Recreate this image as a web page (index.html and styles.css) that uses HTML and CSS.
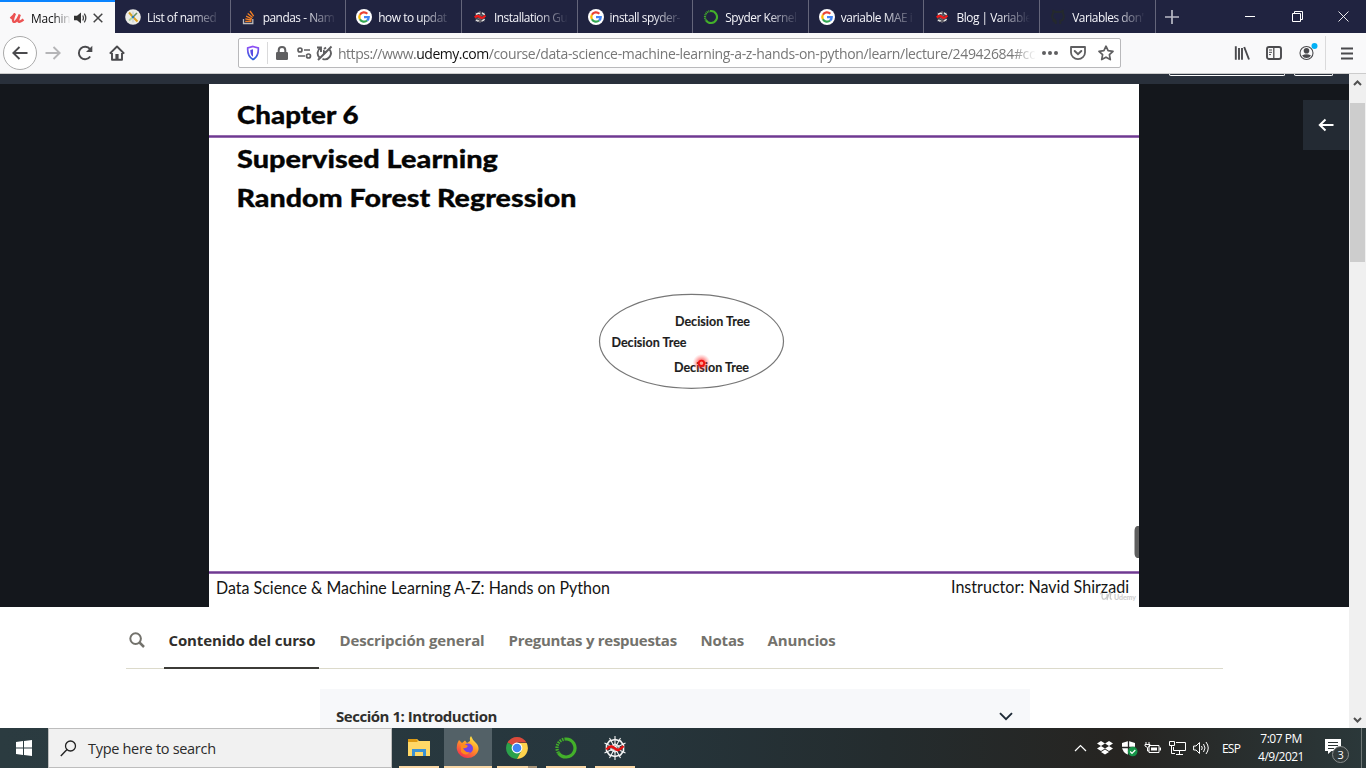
FILE: index.html
```html
<!DOCTYPE html>
<html lang="es">
<head>
<meta charset="utf-8">
<title>Machine Learning</title>
<link rel="stylesheet" href="styles.css">
</head>
<body>
<svg class="defs" width="0" height="0">
  <symbol id="google" viewBox="0 0 16 16"><circle cx="8" cy="8" r="8" fill="#fff"/><g fill="none" stroke-width="2.3"><path d="M11.3 4.7A4.7 4.7 0 0 0 3.9 5.7" stroke="#ea4335"/><path d="M3.9 5.7A4.7 4.7 0 0 0 3.9 10.3" stroke="#fbbc05"/><path d="M3.9 10.3A4.7 4.7 0 0 0 11.1 11.5" stroke="#34a853"/><path d="M11.1 11.5A4.7 4.7 0 0 0 12.7 8.1H8" stroke="#4285f4"/></g></symbol>
  <symbol id="spyder" viewBox="0 0 26 26"><g fill="none" stroke="#f4f4f4"><path d="M13 1V25M2.500 8L23.500 18M2.500 18L23.500 8M7.500 3L18.500 23M18.500 3L7.500 23" stroke-width="1.100"/><path d="M13 4.500L18.500 6L21.500 10L21.500 16L18.500 20L13 21.500L7.500 20L4.500 16L4.500 10L7.500 6Z" stroke-width="1.600"/><path d="M13 9L17 11V15L13 17L9 15V11Z" stroke-width="1.200"/></g><path d="M4.500 14.500C8 10 10.500 11 13 13.500S18 15 21.500 11" fill="none" stroke="#e31212" stroke-width="2.600"/></symbol>
  <symbol id="spyder-small" viewBox="0 0 16 16"><circle cx="8" cy="8" r="5.200" fill="#45434c"/><path d="M8 2V14M3.500 4L12.500 12M3.500 12L12.500 4" stroke="#77757d" stroke-width="1"/><path d="M4 5.500Q6 3.500 8 4.600M10 4Q12 4.500 12.500 6M4 11Q5.500 12.500 7 11.500M9.500 12Q11.500 12 12.500 10" fill="none" stroke="#e4e4e4" stroke-width="1.500"/><path d="M2.800 8.500C5 6 7 7 8.500 8.300S11 9 13.400 6.500" fill="none" stroke="#f01818" stroke-width="2.200"/></symbol>
  <symbol id="anaconda" viewBox="0 0 24 24"><path d="M12 3A9 9 0 1 1 4.5 17" fill="none" stroke="#43b02a" stroke-width="3.2"/><path d="M12 3A9 9 0 0 0 4.5 17" fill="none" stroke="#43b02a" stroke-width="3.2" stroke-dasharray="1.5 1"/></symbol>
</svg>

<header class="tabstrip">
  <div class="tab active"><svg class="fav" viewBox="0 0 16 16"><path d="M1.500 8.500Q4.500 6 6 3.500Q3.800 8.500 4 10.500Q4.300 12.800 6.500 11.500Q8.500 10 10.800 4.500Q9 9.500 9.300 11Q10 13 14.500 9.500" fill="none" stroke="#ec5252" stroke-width="2.300"/></svg><span class="label">Machin</span>
    <svg class="sound" width="15" height="14" viewBox="0 0 15 14"><path d="M1 4.7H4L8 1.5V12.5L4 9.3H1Z" fill="#333"/><path d="M9.7 4.5Q11.2 7 9.7 9.5M11.3 2.6Q14.3 7 11.3 11.4" fill="none" stroke="#444" stroke-width="1.3"/></svg>
    <svg class="close" width="10" height="10" viewBox="0 0 10 10"><path d="M.7.7L9.3 9.3M9.3.7L.7 9.3" stroke="#444" stroke-width="1.5"/></svg></div>
  <div class="tab"><svg class="fav" viewBox="0 0 16 16"><circle cx="8" cy="8" r="7.8" fill="#ecece7"/><path d="M8 8L4 3.500" stroke="#d8a322" stroke-width="2"/><path d="M8 8L12.500 12.500" stroke="#e2a31f" stroke-width="2"/><path d="M8 8L12 4" stroke="#698f5e" stroke-width="1.600"/><path d="M8 8L4 11.500" stroke="#a9d3a1" stroke-width="1.800"/><path d="M8 8V2.500M8 8V13.500" stroke="#b9c8cd"/><circle cx="8" cy="8" r="1.2" fill="#2878b8"/></svg><span class="label">List of named</span></div>
  <div class="tab"><svg class="fav" viewBox="0 0 16 16"><path d="M2.5 10V14.5H11.8V10" fill="none" stroke="#bcbbbb" stroke-width="1.3"/><path d="M4.2 12.3H10.4M4.3 9.8L10.5 11M5.1 7.1L10.9 9.8M6.7 4.4L11.6 8.4M9 2L12.7 7.1" stroke="#f48024" stroke-width="1.3"/></svg><span class="label">pandas - Nam</span></div>
  <div class="tab"><svg class="fav"><use href="#google"/></svg><span class="label">how to updat</span></div>
  <div class="tab"><svg class="fav"><use href="#spyder-small"/></svg><span class="label">Installation Gu</span></div>
  <div class="tab"><svg class="fav"><use href="#google"/></svg><span class="label">install spyder-</span></div>
  <div class="tab"><svg class="fav"><use href="#anaconda"/></svg><span class="label">Spyder Kernel</span></div>
  <div class="tab"><svg class="fav"><use href="#google"/></svg><span class="label">variable MAE i</span></div>
  <div class="tab"><svg class="fav"><use href="#spyder-small"/></svg><span class="label">Blog | Variable</span></div>
  <div class="tab"><svg class="fav" viewBox="0 0 16 16"><path d="M5.7 15V12.5Q3.8 13 3 11.2M10.3 15V11.8Q13.8 11.3 13.8 7.2Q13.8 5.5 12.8 4.4V1.8L10 3.1H6L3.2 1.8V4.4Q2.2 5.5 2.2 7.2Q2.2 10.5 5.7 11.5" fill="none" stroke="#24292e" stroke-width="2"/></svg><span class="label">Variables don'</span></div>
  <svg class="plus" width="14" height="14" viewBox="0 0 14 14"><path d="M7 0V14M0 7H14" stroke="#b9bac6" stroke-width="1.7"/></svg>
  <div class="winctl">
    <svg width="11" height="11" viewBox="0 0 11 11"><path d="M0 5.5H10" stroke="#fff"/></svg>
    <svg width="11" height="11" viewBox="0 0 11 11"><path d="M.5 2.5H8.5V10.5H.5ZM2.5 2V.5H10.5V8.5H9" fill="none" stroke="#fff"/></svg>
    <svg width="11" height="11" viewBox="0 0 11 11"><path d="M.5.5L10.5 10.5M10.5.5L.5 10.5" stroke="#fff" stroke-width=".9"/></svg>
  </div>
</header>

<nav class="toolbar">
  <div class="navbtns">
    <span class="back"><svg width="16" height="16" viewBox="0 0 16 16"><path d="M15.5 8H1.5M7.5 2L1.3 8L7.5 14" class="ln"/></svg></span>
    <svg class="fwd" width="16" height="16" viewBox="0 0 16 16"><path d="M.5 8H14.5M8.5 2L14.7 8L8.5 14" class="ln pale"/></svg>
    <svg width="16" height="16" viewBox="0 0 16 16"><path d="M13.2 11.5A6.2 6.2 0 1 1 13 4.2" class="ln"/><path d="M15.3.8V7H9Z" fill="#4a4a4d"/></svg>
    <svg width="16" height="16" viewBox="0 0 16 16"><path d="M.8 8.7L8 1.5L15.2 8.7M3 8V14.8H13V8" class="ln" stroke-linejoin="round"/><path d="M6.4 14.5V9H9.6V14.5Z" fill="#4a4a4d"/></svg>
  </div>
  <div class="urlbar">
    <svg class="shield" width="14" height="16" viewBox="0 0 14 16"><defs><linearGradient id="sg" x2="0" y2="1"><stop stop-color="#8f4ef5"/><stop offset="1" stop-color="#2860d8"/></linearGradient></defs><path d="M7 1.5L12.3 3Q12.8 11.5 7 14.5Q1.2 11.5 1.7 3Z" fill="none" stroke="url(#sg)" stroke-width="1.7"/><path d="M7 4.3V11.7Q4.2 10 4.3 5Z" fill="#574be3"/></svg>
    <i class="rule"></i>
    <svg class="lock" width="12" height="14" viewBox="0 0 12 14"><rect y="6" width="12" height="8" rx="1.2" fill="#5f5f61"/><path d="M2.7 7V4.3Q2.7 1 6 1T9.3 4.3V7" fill="none" stroke="#5f5f61" stroke-width="2"/></svg>
    <svg class="perm" width="15" height="14" viewBox="0 0 15 14"><g fill="none" stroke="#5f5f61" stroke-width="1.7"><circle cx="3" cy="4" r="2"/><path d="M7 4H13M1 10H8"/><circle cx="11.5" cy="10" r="2"/></g></svg>
    <svg class="auto" width="17" height="16" viewBox="0 0 17 16"><path d="M3.500 12.500A6 6 0 0 1 4.500 3M10 2.500L8 4M13.500 4.500A6 6 0 0 1 6.500 13.800M1 2.500H5V7" fill="none" stroke="#5f5f61" stroke-width="1.9"/><path d="M7 4.500L11 7L7 10.500Z" fill="#5f5f61"/><path d="M2 15L15.500 1.500" stroke="#5f5f61" stroke-width="1.900"/></svg>
    <span class="url"><span class="u1">https://www.</span><b>udemy.com</b><span class="u3">/course/data-science-machine-learning-a-z-hands-on-python/learn/lecture/24942684#cc</span></span>
    <svg class="dots" width="16" height="16" viewBox="0 0 16 16"><g fill="#5f5f61"><circle cx="2" cy="8" r="2"/><circle cx="8" cy="8" r="2"/><circle cx="14" cy="8" r="2"/></g></svg>
    <svg class="pocket" width="16" height="16" viewBox="0 0 16 16"><path d="M1 2H15V7.5A7 6.6 0 0 1 1 7.5Z" fill="none" stroke="#5f5f61" stroke-width="1.8" stroke-linejoin="round"/><path d="M4.7 6L8 9.2L11.3 6" fill="none" stroke="#5f5f61" stroke-width="2" stroke-linecap="round"/></svg>
    <svg class="star" width="16" height="16" viewBox="0 0 16 16"><path d="M8 1.2L10.1 5.7L15 6.3L11.4 9.7L12.3 14.6L8 12.2L3.7 14.6L4.6 9.7L1 6.3L5.9 5.7Z" fill="none" stroke="#5f5f61" stroke-width="1.7" stroke-linejoin="round"/></svg>
  </div>
  <div class="tools">
    <svg width="16" height="16" viewBox="0 0 16 16"><path d="M1.8 1.3V14.7M5 3V14.7M8 3V14.7M10.2 2L15 14.5" class="ln"/></svg>
    <svg width="16" height="16" viewBox="0 0 16 16"><rect x="1" y="2" width="14" height="12" rx="2" class="ln"/><path d="M7.8 2V14" class="ln thin"/><path d="M3 5H6M3 7.3H6M3 9.6H5" stroke="#4a4a4d" stroke-width="1"/></svg>
    <svg class="account" width="20" height="20" viewBox="0 0 20 20"><circle cx="8.5" cy="11" r="6.5" fill="none" stroke="#4a4a4d" stroke-width="1.1"/><circle cx="8.5" cy="8.8" r="2.8" fill="#4a4a4d"/><path d="M4 13.5Q8.5 11 13 13.5Q11.5 16 8.5 16T4 13.5" fill="#4a4a4d"/><circle cx="16.5" cy="4" r="3" fill="#00b0f6"/></svg>
    <i class="rule"></i>
    <svg width="12" height="13" viewBox="0 0 12 13"><path d="M0 1.5H12M0 6.5H12M0 11.5H12" stroke="#4a4a4d" stroke-width="1.8"/></svg>
  </div>
</nav>

<main class="viewport">
  <div class="page">
    <div class="course-bar"><i class="cut wide"></i><i class="cut"></i></div>
    <section class="player">
      <svg class="slide" width="930" height="523" viewBox="209 84 930 523">
        <defs><radialGradient id="laser"><stop stop-color="#f00" stop-opacity=".75"/><stop offset=".45" stop-color="#f22" stop-opacity=".5"/><stop offset="1" stop-color="#f66" stop-opacity="0"/></radialGradient></defs>
        <rect x="209" y="84" width="930" height="523" fill="#fff"/>
        <path d="M209 136.5H1139M209 572.5H1139" stroke="#a47bb8" stroke-width="3"/>
        <path d="M209 136.5H1139M209 572.5H1139" stroke="#6c3a91" stroke-width="1.4"/>
        <g class="heading">
          <text x="237" y="123.5" textLength="121.500" lengthAdjust="spacingAndGlyphs">Chapter 6</text>
          <text x="237" y="168" textLength="261" lengthAdjust="spacingAndGlyphs">Supervised Learning</text>
          <text x="236.5" y="207" textLength="340" lengthAdjust="spacingAndGlyphs">Random Forest Regression</text>
        </g>
        <ellipse cx="691.5" cy="341.3" rx="92" ry="47" fill="none" stroke="#777" stroke-width="1.2"/>
        <g class="node">
          <text x="675" y="325.5" textLength="75" lengthAdjust="spacingAndGlyphs">Decision Tree</text>
          <text x="611.5" y="347.3" textLength="75" lengthAdjust="spacingAndGlyphs">Decision Tree</text>
          <text x="674" y="372" textLength="75" lengthAdjust="spacingAndGlyphs">Decision Tree</text>
        </g>
        <circle cx="701.5" cy="363" r="9" fill="url(#laser)"/>
        <circle cx="701.5" cy="363.3" r="2.7" fill="#ff9a8c" stroke="#f01010" stroke-width="1.8"/>
        <g class="footer-text">
          <text x="216" y="594.4" textLength="394" lengthAdjust="spacingAndGlyphs">Data Science &amp; Machine Learning A-Z: Hands on Python</text>
          <text x="951" y="593.2" textLength="178" lengthAdjust="spacingAndGlyphs">Instructor: Navid Shirzadi</text>
        </g>
        <path d="M1100 594Q1103 592 1102 596Q1102 600 1105 599Q1108 597 1107 594M1107 600Q1109 592 1111 593Q1109 600 1112 599" fill="none" stroke="#c8c8c8" stroke-width="1.3"/>
        <text class="mark" x="1114" y="599.5" textLength="22">Udemy</text>
        <path d="M1139 526H1137Q1134.500 527 1134.500 531V553Q1134.500 557 1137 558H1139Z" fill="#5e5e5e"/>
      </svg>
      <span class="collapse"><svg width="16" height="14" viewBox="0 0 16 14"><path d="M15.500 7H2M7.500 1.500L1.800 7L7.500 12.500" fill="none" stroke="#fff" stroke-width="2"/></svg></span>
    </section>
    <nav class="course-tabs">
      <svg class="find" width="16" height="16" viewBox="0 0 16 16"><circle cx="6.600" cy="6.600" r="5.300" fill="none" stroke="#73726c" stroke-width="2"/><path d="M10.500 10.500L15 15" stroke="#73726c" stroke-width="2.500"/></svg>
      <span class="ct current">Contenido del curso</span>
      <span class="ct c2">Descripción general</span>
      <span class="ct c3">Preguntas y respuestas</span>
      <span class="ct c4">Notas</span>
      <span class="ct c5">Anuncios</span>
    </nav>
    <section class="section-row"><h2>Sección 1: Introduction</h2><svg width="14" height="9" viewBox="0 0 14 9"><path d="M1 1.200L7 7.200L13 1.200" fill="none" stroke="#1e2a36" stroke-width="1.900"/></svg></section>
  </div>
  <aside class="scrollbar">
    <svg width="9" height="6" viewBox="0 0 9 6"><path d="M1 5L4.500 1.500L8 5" fill="none" stroke="#505050" stroke-width="2"/></svg>
    <i class="thumb"></i>
    <svg width="9" height="6" viewBox="0 0 9 6"><path d="M1 1L4.500 4.500L8 1" fill="none" stroke="#505050" stroke-width="2"/></svg>
  </aside>
</main>

<footer class="taskbar">
  <span class="start"><svg width="16" height="16" viewBox="0 0 16 16"><path d="M0 2L7 1.100V7.500H0ZM8 1L16 0V7.500H8ZM0 8.500H7V14.900L0 14ZM8 8.500H16V16L8 15Z" fill="#fff"/></svg></span>
  <div class="search"><svg width="17" height="17" viewBox="0 0 17 17"><circle cx="10.500" cy="6" r="5" fill="none" stroke="#222" stroke-width="1.300"/><path d="M7 9.600L.8 16" stroke="#222" stroke-width="1.400"/></svg><span>Type here to search</span></div>
  <div class="apps">
    <span class="app"><svg width="22" height="20" viewBox="0 0 22 20"><path d="M0 1H9L11 3H22V18H0Z" fill="#ffd867"/><path d="M0 1H8.500L10 3L9 4H0Z" fill="#dd9a13"/><path d="M4 18V11H18V18H15V14H7V18Z" fill="#3b92d4"/></svg></span>
    <span class="app focus"><svg width="24" height="24" viewBox="0 0 24 24"><defs><linearGradient id="fx" x1=".8" y1="0" x2=".2" y2="1"><stop stop-color="#fff04c"/><stop offset=".45" stop-color="#ff9624"/><stop offset="1" stop-color="#f32754"/></linearGradient></defs><path d="M3 4L6 7L9 4.500L11 7L14 5Q13 2 15 0Q17 5 20 7Q23 10 22.500 14A11 10 0 0 1 1 14Q0 9 3 4Z" fill="url(#fx)"/><circle cx="12" cy="12.500" r="5" fill="#7542e5"/><path d="M5 9Q9 7 12 10Q10 13 7 12Q9 17 14 16Q10 21 5 16Z" fill="#ff8a1d"/></svg></span>
    <span class="app multi"><svg width="24" height="24" viewBox="0 0 24 24"><path d="M12 12L2.500 6.500A11 11 0 0 1 21.500 6.500H12Z" fill="#dc4a3b"/><path d="M12 12L2.500 6.500A11 11 0 0 0 12 23L17 14Z" fill="#2ba14b"/><path d="M12 12V7H21.700A11 11 0 0 1 12 23L16.500 14.500Z" fill="#ffd34c"/><circle cx="12" cy="12" r="5.400" fill="#fff"/><circle cx="12" cy="12" r="4.300" fill="#4285f4"/></svg></span>
    <span class="app"><svg width="24" height="24"><use href="#anaconda"/></svg></span>
    <span class="app"><svg width="26" height="26"><use href="#spyder"/></svg></span>
  </div>
  <div class="tray">
    <svg class="t1" width="13" height="8" viewBox="0 0 13 8"><path d="M1 7L6.500 1.500L12 7" fill="none" stroke="#fff" stroke-width="1.200"/></svg>
    <svg class="t2" width="16" height="14" viewBox="0 0 16 14"><path d="M4 0L8 2.500L12 0L16 2.500L12 5L16 7.500L12 10L8 7.500L4 10L0 7.500L4 5L0 2.500ZM8 2.500L4 5L8 7.500L12 5ZM4 11L8 8.500L12 11L8 13.500Z" fill="#fff" fill-rule="evenodd"/></svg>
    <svg class="t3" width="17" height="17" viewBox="0 0 17 17"><path d="M7.500 1L14 3V7Q14 12 7.500 15Q1 12 1 7V3Z" fill="#fff"/><path d="M7.500 1V15M1 7.500H14" stroke="#252525" stroke-width="1.300"/><circle cx="11.700" cy="11.500" r="4.800" fill="#159447"/><path d="M9.200 11.500L11 13.300L14.300 10" fill="none" stroke="#fff" stroke-width="1.200"/></svg>
    <svg class="t4" width="17" height="14" viewBox="0 0 17 14"><path d="M5 4.500H15V11.500H5Z" fill="none" stroke="#fff"/><path d="M7 6.500H13V9.500H7ZM15.500 6.500H17V9.500H15.500Z" fill="#fff"/><path d="M2 1V3M5 1V3M1 3.500H6V5Q3.500 8 1 5ZM3.500 7V10H5" fill="none" stroke="#fff"/></svg>
    <svg class="t5" width="17" height="14" viewBox="0 0 17 14"><path d="M7 1.500H16.500V9.500H4.500V6M10.500 10V13M7 13.500H14M.5.500H5.500V4.500H.5ZM2.500 4V12.500H6" fill="none" stroke="#fff"/></svg>
    <svg class="t6" width="17" height="14" viewBox="0 0 17 14"><path d="M.6 5H3L6.500 1.500V12.500L3 9H.6Z" fill="none" stroke="#fff"/><path d="M8.500 5Q10 7 8.500 9M10.500 3Q13.500 7 10.500 11M13 1Q17.500 7 13 13" fill="none" stroke="#fff"/></svg>
    <span class="lang">ESP</span>
    <div class="clock"><span>7:07 PM</span><span>4/9/2021</span></div>
    <span class="notice"><svg width="24" height="25" viewBox="0 0 24 25"><path d="M0 1H16V13H6.500L3 16V13H0Z" fill="#fff"/><path d="M3 4.500H13M3 7.500H13M3 10.500H9" stroke="#2b3434"/><circle cx="15.500" cy="16.500" r="8" fill="#333b3b" stroke="#8a8e8e"/><text x="12.400" y="20.500" class="badge">3</text></svg></span>
    <i class="desktop"></i>
  </div>
</footer>
</body>
</html>
```

FILE: styles.css
```css
* { box-sizing: border-box; }
body { margin: 0; width: 1366px; height: 768px; overflow: hidden; display: flex; flex-direction: column; background: #fff; font-family: "Open Sans", "Noto Sans", sans-serif; }
svg { display: block; flex: none; }
.defs { position: absolute; }

.tabstrip { flex: none; height: 33px; background: #202340; display: flex; align-items: center; color: #f5f5fa; }
.tab { flex: none; width: 115.65px; height: 33px; display: flex; align-items: center; padding: 1px 8px 0 10px; border-right: 1px solid #64657a; }
.tab.active { width: 115px; background: #f9f9fa; border-top: 2px solid #0a84ff; border-right: 0; color: #0c0c0d; padding: 0 8px 0 9px; }
.fav { width: 16px; height: 16px; margin-right: 6px; }
.tab .label { font-size: 11.900px; letter-spacing: -.47px; white-space: nowrap; overflow: hidden; width: 74px; -webkit-mask-image: linear-gradient(90deg, #000 57%, transparent 100%); mask-image: linear-gradient(90deg, #000 57%, transparent 100%); }
.tab.active .label { width: 40px; letter-spacing: -.2px; }
.sound { margin-left: 2px; }
.close { margin-left: 5px; }
.plus { margin-left: 9px; }
.winctl { margin-left: auto; padding-right: 17px; display: flex; gap: 35.5px; }

.toolbar { flex: none; height: 41px; background: #f9f9fa; border-bottom: 1px solid #ccc; display: flex; align-items: center; padding-left: 3px; }
.navbtns { display: flex; align-items: center; gap: 16px; width: 235px; }
.back { width: 34px; height: 34px; border: 1px solid #aaa; border-radius: 50%; background: #fff; display: grid; place-items: center; margin-right: -8px; }
.ln { fill: none; stroke: #4a4a4d; stroke-width: 1.9; }
.pale { stroke: #b5b5b7; }
.thin { stroke-width: 1.3; }
.urlbar { flex: none; width: 883px; height: 30px; background: #fff; border: 1px solid #b9b9bb; border-radius: 2px; display: flex; align-items: center; }
.shield { margin-left: 7px; }
.rule { flex: none; width: 1px; height: 22px; background: #dadadb; }
.urlbar .rule { margin-left: 7px; }
.lock { margin-left: 8px; }
.perm { margin-left: 9px; }
.auto { margin-left: 4px; }
.url { margin-left: 5px; width: 698px; flex: none; overflow: hidden; white-space: nowrap; color: #777; font-size: 14px; padding-top: 1px; -webkit-mask-image: linear-gradient(90deg, #000 96.5%, transparent 100%); mask-image: linear-gradient(90deg, #000 96.5%, transparent 100%); }
.url b { font-weight: 400; color: #111; letter-spacing: -.48px; }
.u1 { letter-spacing: -.48px; }
.u3 { letter-spacing: -.34px; }
.dots { margin-left: 6px; }
.pocket { margin-left: 12px; }
.star { margin-left: 12px; }
.tools { margin-left: auto; padding-right: 13px; display: flex; align-items: center; gap: 16px; }
.account { margin: -3px -3px 0 0; }
.tools .rule { height: 34px; margin-left: -6px; margin-right: -1px; }

.viewport { flex: none; height: 654px; display: flex; overflow: hidden; }
.page { width: 1349px; display: flex; flex-direction: column; align-items: flex-start; }
.course-bar { flex: none; width: 100%; height: 10px; background: #29303b; display: flex; justify-content: flex-end; gap: 9px; padding-right: 16.500px; }
.cut { width: 39px; height: 2px; border: 1px solid #fff; border-top: 0; border-radius: 0 0 3px 3px; }
.cut.wide { width: 116px; }
.player { flex: none; width: 100%; height: 523px; background: #14171c; display: flex; justify-content: space-between; padding-left: 209px; }
.collapse { width: 46px; height: 50px; margin-top: 16px; background: #232a33; display: grid; place-items: center; }
.heading { font: 900 25.500px Lato, sans-serif; fill: #050505; stroke: #050505; stroke-width: .3px; }
.node { font: 700 12.500px Lato, sans-serif; fill: #1d1d1d; stroke: #1d1d1d; stroke-width: .15px; }
.footer-text { font: 400 16.500px Lato, sans-serif; fill: #151515; }
.mark { font: 700 7px Lato, sans-serif; fill: #ccc; }
.course-tabs { flex: none; width: 1097px; height: 62px; margin-left: 126px; border-bottom: 1px solid #dcdacb; display: flex; align-items: stretch; color: #73726c; }
.find { margin: 25px 20px 0 3px; }
.ct { flex: none; height: 62px; line-height: 67px; padding: 0; white-space: nowrap; font-size: 15px; font-weight: 700; letter-spacing: -.28px; }
.current { width: 155px; padding-left: 4.500px; margin-left: -1px; border-bottom: 2px solid #3c3b37; color: #302f2c; letter-spacing: -.12px; }
.c2 { width: 169px; padding-left: 20.500px; letter-spacing: -.15px; }
.c3 { width: 192px; padding-left: 20.500px; }
.c4 { width: 67px; padding-left: 20.500px; letter-spacing: -.2px; }
.c5 { width: 90px; padding-left: 20.500px; letter-spacing: -.1px; }
.section-row { flex: none; width: 710px; height: 59px; margin: 20px 0 0 320px; background: #f7f8fa; display: flex; align-items: center; justify-content: space-between; padding: 0 17px 5px 16px; }
.section-row h2 { margin: 0; font-size: 15px; color: #302f2c; letter-spacing: -.47px; }
.scrollbar { width: 17px; background: #f0f0f0; display: flex; flex-direction: column; align-items: center; padding: 6px 0 5px; }
.thumb { width: 15px; height: 159px; margin: 17px 1px auto 0; background: #cdcdcd; }

.taskbar { flex: none; height: 40px; background: linear-gradient(90deg, #2b3b40 0, #26363d 45%, #242c2e 65%, #262421 82%, #2b383a 100%); display: flex; align-items: center; color: #fff; }
.start { width: 48px; display: grid; place-items: center; }
.search { width: 344px; height: 40px; background: #f1f1f1; border: 1px solid #bdbdbd; display: flex; align-items: center; gap: 11px; padding-left: 11px; color: #2b2b2b; font-size: 14.500px; letter-spacing: -.3px; }
.apps { display: flex; margin-left: 3px; gap: 1px; }
.app { width: 48px; height: 40px; display: grid; place-items: center; background: linear-gradient(#f9d7a5, #f9d7a5) center bottom / 40px 2px no-repeat; }
.app.focus { background: linear-gradient(#f9d7a5, #f9d7a5) center bottom / 48px 2px no-repeat, #536167; }
.app.multi { background: linear-gradient(90deg, #f9d7a5 31px, #a99579 31px) center bottom / 40px 2px no-repeat; }
.tray { margin-left: auto; display: flex; align-items: center; height: 40px; }
.t2 { margin-left: 10px; }
.t3 { margin-left: 8px; }
.t4 { margin-left: 6px; }
.t5 { margin-left: 8px; }
.t6 { margin-left: 7px; }
.lang { width: 20px; margin-left: 12px; font-size: 12px; letter-spacing: -.8px; }
.clock { width: 58px; margin-left: 10px; display: flex; flex-direction: column; align-items: center; font-size: 12px; line-height: 18px; letter-spacing: -.5px; }
.notice { margin: 5px 12px 0 15px; }
.badge { font-size: 11px; fill: #fff; }
.desktop { width: 1px; height: 40px; background: #6f7777; margin-right: 4px; }
```
